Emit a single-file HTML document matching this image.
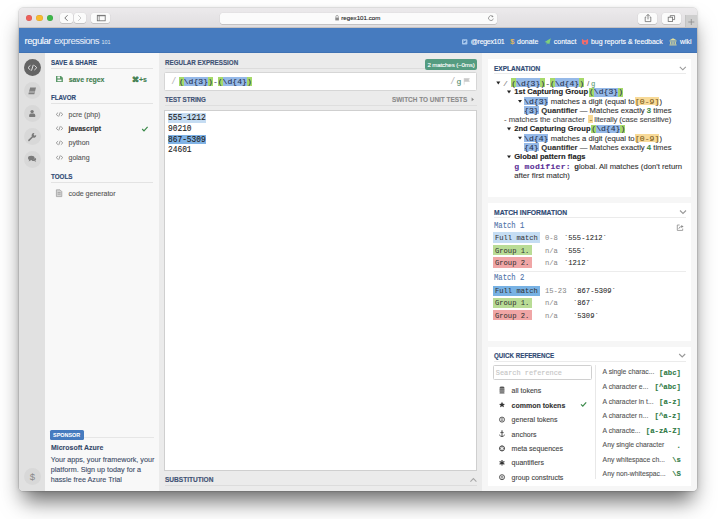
<!DOCTYPE html>
<html><head><meta charset="utf-8">
<style>
*{box-sizing:border-box;margin:0;padding:0}
html,body{width:718px;height:519px;overflow:hidden;background:#fff;position:relative;font-family:"Liberation Sans",sans-serif;}
.a{position:absolute;}
.t{position:absolute;line-height:1;white-space:nowrap;-webkit-text-stroke:0.1px currentColor;}
.t span{white-space:pre}
.m{font-family:"Liberation Mono",monospace;}
</style></head><body>

<div class="a" style="left:19.00px;top:7.80px;width:678.00px;height:483.20px;background:#ebebeb;border-radius:3.8px;box-shadow:0 14px 20px -4px rgba(0,0,0,0.58),0 0 4px rgba(0,0,0,0.12),0 0 0 0.5px rgba(0,0,0,0.14);"></div>
<div class="a" style="left:19.00px;top:7.80px;width:678.00px;height:20.20px;background:linear-gradient(#eceaec,#e0dee0);border-radius:3.8px 3.8px 0 0;border-bottom:1px solid #c6c2c2;"></div>
<div class="a" style="left:25.70px;top:14.7px;width:6.4px;height:6.4px;border-radius:50%;background:#ee5f5a;box-shadow:inset 0 0 0 0.4px rgba(0,0,0,0.12)"></div>
<div class="a" style="left:36.40px;top:14.7px;width:6.4px;height:6.4px;border-radius:50%;background:#f8ba2e;box-shadow:inset 0 0 0 0.4px rgba(0,0,0,0.12)"></div>
<div class="a" style="left:46.80px;top:14.7px;width:6.4px;height:6.4px;border-radius:50%;background:#3db849;box-shadow:inset 0 0 0 0.4px rgba(0,0,0,0.12)"></div>
<div class="a" style="left:60.00px;top:13.00px;width:12.60px;height:10.40px;background:#fbfbfb;background:#fbfbfb;border-radius:2px;box-shadow:0 0.5px 0.6px rgba(0,0,0,0.22),0 0 0 0.3px rgba(0,0,0,0.08);"></div>
<div class="a" style="left:73.60px;top:13.00px;width:12.40px;height:10.40px;background:#fbfbfb;background:#fbfbfb;border-radius:2px;box-shadow:0 0.5px 0.6px rgba(0,0,0,0.22),0 0 0 0.3px rgba(0,0,0,0.08);"></div>
<div class="a" style="left:91.40px;top:13.00px;width:18.60px;height:10.40px;background:#fbfbfb;background:#fbfbfb;border-radius:2px;box-shadow:0 0.5px 0.6px rgba(0,0,0,0.22),0 0 0 0.3px rgba(0,0,0,0.08);"></div>
<div class="a" style="left:219.50px;top:13.00px;width:277.10px;height:10.60px;background:#fcfcfc;background:#fbfbfb;border-radius:2px;box-shadow:0 0.5px 0.6px rgba(0,0,0,0.22),0 0 0 0.3px rgba(0,0,0,0.08);"></div>
<div class="a" style="left:638.20px;top:12.90px;width:18.70px;height:10.70px;background:#fbfbfb;background:#fbfbfb;border-radius:2px;box-shadow:0 0.5px 0.6px rgba(0,0,0,0.22),0 0 0 0.3px rgba(0,0,0,0.08);"></div>
<div class="a" style="left:661.80px;top:12.90px;width:18.80px;height:10.70px;background:#fbfbfb;background:#fbfbfb;border-radius:2px;box-shadow:0 0.5px 0.6px rgba(0,0,0,0.22),0 0 0 0.3px rgba(0,0,0,0.08);"></div>
<div class="a" style="left:685.00px;top:15.20px;width:12.00px;height:11.80px;background:#cfcfcf;border-left:0.5px solid #c4c4c4;"></div>
<svg class="a" style="left:0;top:0" width="718" height="30">
 <path d="M67.6 15.2 L64.8 18 L67.6 20.8" fill="none" stroke="#6a6a6a" stroke-width="0.9"/>
 <path d="M78.2 15.2 L81 18 L78.2 20.8" fill="none" stroke="#c4c4c4" stroke-width="0.9"/>
 <rect x="97.3" y="15.3" width="7.9" height="5.5" fill="none" stroke="#707070" stroke-width="0.8"/>
 <rect x="97.3" y="15.3" width="7.9" height="0.9" fill="#707070"/>
 <line x1="99.2" y1="15.3" x2="99.2" y2="20.8" stroke="#707070" stroke-width="0.7"/>
 <rect x="335.3" y="17.6" width="3.6" height="2.8" fill="#8a8a8a"/>
 <path d="M335.9 17.8 V16.6 a1.2 1.2 0 0 1 2.4 0 V17.8" fill="none" stroke="#8a8a8a" stroke-width="0.7"/>
 <path d="M492.6 16.4 A2.4 2.4 0 1 0 493.3 18.6" fill="none" stroke="#8a8a8a" stroke-width="0.8"/>
 <path d="M491.6 15.3 L493.6 16.3 L492 17.6 Z" fill="#8a8a8a"/>
 <path d="M646.3 17 H645.2 V21.6 H650.8 V17 H649.7" fill="none" stroke="#6e6e6e" stroke-width="0.8"/>
 <path d="M648 19.4 V14.4 M646.4 16 L648 14.4 L649.6 16" fill="none" stroke="#6e6e6e" stroke-width="0.8"/>
 <rect x="668.2" y="17.2" width="4.4" height="4.2" fill="none" stroke="#6e6e6e" stroke-width="0.8"/>
 <path d="M670.2 17.2 V15.6 H674.6 V19.6 H672.6" fill="none" stroke="#6e6e6e" stroke-width="0.8"/>
 <path d="M691.3 19 V25 M688.3 22 H694.3" stroke="#8a8a8a" stroke-width="0.8"/>
</svg>
<div class="t" id="url" style="left:341.20px;top:14.95px;font-size:6.2px;color:#222;font-weight:normal;letter-spacing:0px;">regex101.com</div>
<div class="a" style="left:19.00px;top:28.00px;width:678.00px;height:25.00px;background:#467bbf;border-bottom:0.8px solid #3f72b4;"></div>
<div class="t" id="logo" style="left:24.6px;top:34.5px;font-size:9.6px;color:#fff;line-height:12px;-webkit-text-stroke:0.05px #fff"><span id="lg1" style="letter-spacing:-0.5px;">regular</span><span id="lg2" style="letter-spacing:-0.56px;color:#e8eef8;margin-left:3px;-webkit-text-stroke:0">expressions</span><span id="lg3" style="font-size:5.4px;margin-left:2.6px;letter-spacing:-0.1px;color:#dfe8f4;-webkit-text-stroke:0">101</span></div>
<div class="t" id="l1" style="left:470.80px;top:38.17px;font-size:7px;color:#fff;font-weight:normal;letter-spacing:-0.3px;">@regex101</div>
<div class="t" id="l2" style="left:510.20px;top:37.84px;font-size:7.4px;color:#f2c14a;font-weight:normal;letter-spacing:0px;">$</div>
<div class="t" id="l3" style="left:517.00px;top:38.17px;font-size:7px;color:#fff;font-weight:normal;letter-spacing:0px;">donate</div>
<div class="t" id="l4" style="left:553.80px;top:38.17px;font-size:7px;color:#fff;font-weight:normal;letter-spacing:0px;">contact</div>
<div class="t" id="l5" style="left:590.90px;top:38.17px;font-size:7px;color:#fff;font-weight:normal;letter-spacing:-0.02px;">bug reports &amp; feedback</div>
<div class="t" id="l6" style="left:679.90px;top:38.17px;font-size:7px;color:#fff;font-weight:normal;letter-spacing:0px;">wiki</div>
<svg class="a" style="left:0;top:28px" width="718" height="25">
 <rect x="462" y="11.2" width="5.4" height="5.4" rx="0.8" fill="#a9c9ee"/>
 <path d="M463.2 14.8 q1.6 0.6 2.8 -1.4 l0.4 -0.7 l-0.5 0.1 q-0.6 -0.5 -1.1 0.2 q-1 0 -1.6 -0.7 q-0.2 0.9 0.5 1.3 q-0.5 0.6 -0.5 1.2z" fill="#467bbf"/>
 <path d="M550.8 10.3 L544.7 14.1 L546.9 14.7 L546.2 16.7 L547.9 15.3 L549.3 16.3 Z" fill="#80d07c"/>
 <path d="M581.9 11.2 L582.5 10.9 L583.8 12.2 H586.2 L587.5 10.9 L588.1 11.2 V14.8 Q588.1 16.7 585 16.7 Q581.9 16.7 581.9 14.8 Z" fill="#f26b6b"/>
 <circle cx="585" cy="15.1" r="1" fill="#467bbf"/>
 <path d="M669.5 12.3 L673 10.3 L676.6 12.3 Z" fill="#e4df9a"/>
 <rect x="669.5" y="12.6" width="7.1" height="0.8" fill="#e4df9a"/>
 <rect x="670.2" y="13.6" width="1.2" height="2.8" fill="#e4df9a"/><rect x="672.4" y="13.6" width="1.2" height="2.8" fill="#e4df9a"/><rect x="674.6" y="13.6" width="1.2" height="2.8" fill="#e4df9a"/>
 <rect x="669.5" y="16.5" width="7.1" height="0.9" fill="#e4df9a"/>
</svg>
<div class="a" style="left:19.00px;top:53.00px;width:26.00px;height:438.00px;background:#e1e1e1;border-bottom-left-radius:4.5px;"></div>
<div class="a" style="left:45.00px;top:53.00px;width:114.00px;height:438.00px;background:#f8f8f8;"></div>
<div class="a" style="left:159.00px;top:53.00px;width:322.50px;height:438.00px;background:#ebebeb;"></div>
<div class="a" style="left:481.50px;top:53.00px;width:215.50px;height:438.00px;background:#f6f6f6;border-bottom-right-radius:4.5px;"></div>
<div class="a" style="left:23.80px;top:59.10px;width:17.2px;height:17.2px;border-radius:50%;background:#646464"></div>
<div class="a" style="left:23.80px;top:81.90px;width:17.2px;height:17.2px;border-radius:50%;background:#d8d8d8"></div>
<div class="a" style="left:23.80px;top:104.80px;width:17.2px;height:17.2px;border-radius:50%;background:#d8d8d8"></div>
<div class="a" style="left:23.80px;top:127.70px;width:17.2px;height:17.2px;border-radius:50%;background:#d8d8d8"></div>
<div class="a" style="left:23.80px;top:150.60px;width:17.2px;height:17.2px;border-radius:50%;background:#d8d8d8"></div>
<div class="a" style="left:23.80px;top:467.80px;width:17.2px;height:17.2px;border-radius:50%;background:#d8d8d8"></div>
<svg class="a" style="left:19px;top:53px" width="26" height="438">
 <path d="M11.4 12.4 L9 14.7 L11.4 17 M15.4 12.4 L17.8 14.7 L15.4 17 M14.3 11.8 L12.5 17.6" fill="none" stroke="#ececec" stroke-width="0.9"/>
 <path d="M9.4 41.2 L11.1 34.4 H17 L15.3 41.2 Z" fill="#7e7e7e"/>
 <path d="M9.8 39.6 H15.6 M10.1 38.4 H15.9" stroke="#dedede" stroke-width="0.45"/>
 <circle cx="13.1" cy="58.6" r="1.7" fill="#7a7a7a"/>
 <path d="M10.2 64.1 V62.2 Q10.2 60.6 11.8 60.6 H14.6 Q16.2 60.6 16.2 62.2 V64.1 Z" fill="#7a7a7a"/>
 <path d="M9.9 87.4 L14.3 83" stroke="#7a7a7a" stroke-width="1.5" stroke-linecap="round"/>
 <path d="M13.3 84.1 A2.3 2.3 0 0 1 15.4 80.2 L14.6 81.8 L15.5 82.8 L17.2 82.1 A2.3 2.3 0 0 1 13.3 84.1 Z" fill="#7a7a7a"/>
 <ellipse cx="12.3" cy="104.9" rx="3.3" ry="2.2" fill="#7a7a7a"/>
 <path d="M10.4 106.4 L9.6 108.4 L12.4 106.9 Z" fill="#7a7a7a"/>
 <path d="M14.6 107.9 Q17.2 107.9 17.2 106.3 Q17.2 105.2 16 104.7 Q15.6 106.9 12.4 107.4 Q13.2 107.9 14.6 107.9 Z M16.2 107.6 L17.4 109 L15.2 108" fill="#7a7a7a"/>
 <text x="13.4" y="426.6" font-size="9.5" fill="#8a8a8a" text-anchor="middle" font-family="Liberation Sans">$</text>
</svg>
<div class="t" id="h1" style="left:50.85px;top:58.91px;font-size:7.2px;color:#2f4a74;font-weight:bold;letter-spacing:0px;transform:scaleX(0.8592);transform-origin:0 0;-webkit-text-stroke:0.15px #2f4a74;">SAVE &amp; SHARE</div>
<div class="a" style="left:50.85px;top:68.00px;width:102.15px;height:0.70px;background:#e3e3e3;"></div>
<div class="t" id="s1" style="left:68.70px;top:75.77px;font-size:7px;color:#3f7d4f;font-weight:bold;letter-spacing:-0.05px;">save regex</div>
<div class="t" id="s2" style="left:132.20px;top:75.77px;font-size:7px;color:#3f7d4f;font-weight:bold;letter-spacing:-0.2px;">&#8984;+s</div>
<svg class="a" style="left:0;top:0" width="160" height="200">
 <path d="M56 75.9 H61 L62.9 77.8 V82 H56 Z" fill="#5a9868"/>
 <rect x="57.4" y="76.5" width="2.6" height="1.9" fill="#f7f7f7"/>
 <rect x="57.4" y="79.6" width="4.1" height="1.6" fill="#f7f7f7"/>
</svg>
<div class="t" id="h2" style="left:50.85px;top:94.01px;font-size:7.2px;color:#2f4a74;font-weight:bold;letter-spacing:0px;transform:scaleX(0.8619);transform-origin:0 0;-webkit-text-stroke:0.15px #2f4a74;">FLAVOR</div>
<div class="a" style="left:50.85px;top:102.80px;width:102.15px;height:0.70px;background:#e3e3e3;"></div>
<div class="t" style="left:68.50px;top:110.87px;font-size:7px;color:#555;font-weight:normal;letter-spacing:0px;">pcre (php)</div>
<svg class="a" style="left:0;top:0" width="160" height="200"><path d="M58.1 112.60 L56.2 114.40 L58.1 116.20 M60.9 112.60 L62.8 114.40 L60.9 116.20 M60.3 112.20 L58.7 116.60" fill="none" stroke="#8c8c8c" stroke-width="0.85"/></svg>
<div class="t" style="left:68.50px;top:124.77px;font-size:7px;color:#333;font-weight:bold;letter-spacing:0px;">javascript</div>
<svg class="a" style="left:0;top:0" width="160" height="200"><path d="M58.1 126.50 L56.2 128.30 L58.1 130.10 M60.9 126.50 L62.8 128.30 L60.9 130.10 M60.3 126.10 L58.7 130.50" fill="none" stroke="#8c8c8c" stroke-width="0.85"/></svg>
<div class="t" style="left:68.50px;top:139.37px;font-size:7px;color:#555;font-weight:normal;letter-spacing:0px;">python</div>
<svg class="a" style="left:0;top:0" width="160" height="200"><path d="M58.1 141.10 L56.2 142.90 L58.1 144.70 M60.9 141.10 L62.8 142.90 L60.9 144.70 M60.3 140.70 L58.7 145.10" fill="none" stroke="#8c8c8c" stroke-width="0.85"/></svg>
<div class="t" style="left:68.50px;top:154.07px;font-size:7px;color:#555;font-weight:normal;letter-spacing:0px;">golang</div>
<svg class="a" style="left:0;top:0" width="160" height="200"><path d="M58.1 155.80 L56.2 157.60 L58.1 159.40 M60.9 155.80 L62.8 157.60 L60.9 159.40 M60.3 155.40 L58.7 159.80" fill="none" stroke="#8c8c8c" stroke-width="0.85"/></svg>
<svg class="a" style="left:0;top:0" width="160" height="200">
 <path d="M142.2 129 L144 130.8 L147.6 126.8" fill="none" stroke="#3b8a4a" stroke-width="1.2"/>
 <path d="M56.4 189.8 H60 L61.8 191.6 V196.6 H56.4 Z" fill="#d4d4d4" stroke="#999" stroke-width="0.7"/>
 <path d="M57.6 192.6 H60.6 M57.6 194.2 H60.6" stroke="#8a8a8a" stroke-width="0.6"/>
</svg>
<div class="t" id="h3" style="left:50.60px;top:172.97px;font-size:7.0px;color:#2f4a74;font-weight:bold;letter-spacing:0px;transform:scaleX(0.8964);transform-origin:0 0;-webkit-text-stroke:0.15px #2f4a74;">TOOLS</div>
<div class="a" style="left:50.85px;top:181.70px;width:102.15px;height:0.70px;background:#e3e3e3;"></div>
<div class="t" style="left:68.50px;top:189.67px;font-size:7px;color:#555;font-weight:normal;letter-spacing:0px;">code generator</div>
<div class="a" style="left:50.30px;top:430.00px;width:33.50px;height:9.80px;background:#467bbf;border-radius:1.5px;"></div>
<div class="t" id="sp" style="left:53.40px;top:432.69px;font-size:5.8px;color:#fff;font-weight:bold;letter-spacing:0px;transform:scaleX(0.9377);transform-origin:0 0;-webkit-text-stroke:0.05px #fff;">SPONSOR</div>
<div class="a" style="left:83.80px;top:436.80px;width:69.90px;height:0.60px;background:#e6e6e6;"></div>
<div class="t" id="az" style="left:50.75px;top:444.31px;font-size:7.2px;color:#34496a;font-weight:bold;letter-spacing:0px;transform:scaleX(0.9688);transform-origin:0 0;-webkit-text-stroke:0.1px #34496a;">Microsoft Azure</div>
<div class="t" id="spt462" style="left:50.75px;top:456.11px;font-size:7.2px;color:#3a4a66;font-weight:normal;letter-spacing:0px;">Your apps, your framework, your</div>
<div class="t" id="spt472" style="left:50.75px;top:465.91px;font-size:7.2px;color:#3a4a66;font-weight:normal;letter-spacing:0px;">platform. Sign up today for a</div>
<div class="t" id="spt481" style="left:50.75px;top:475.71px;font-size:7.2px;color:#3a4a66;font-weight:normal;letter-spacing:0px;">hassle free Azure Trial</div>
<div class="t" id="m1" style="left:164.80px;top:58.87px;font-size:7.0px;color:#3f5275;font-weight:bold;letter-spacing:0px;transform:scaleX(0.8919);transform-origin:0 0;-webkit-text-stroke:0.15px #3f5275;">REGULAR EXPRESSION</div>
<div class="a" style="left:164.80px;top:67.90px;width:260.10px;height:0.60px;background:#dcdcdc;"></div>
<div class="a" style="left:424.90px;top:59.10px;width:51.90px;height:10.80px;background:#559c81;border-radius:2px;"></div>
<div class="t" id="badge" style="left:427.40px;top:61.65px;font-size:6.2px;color:#fff;font-weight:normal;letter-spacing:-0.15px;">2 matches (~0ms)</div>
<div class="a" style="left:164.20px;top:72.20px;width:312.60px;height:18.80px;background:#fff;border:0.6px solid #d6d6d6;border-radius:1.5px;"></div>
<div class="t" style="left:171.20px;top:78.16px;font-size:8.4px;color:#b0b0b0;font-weight:normal;letter-spacing:0px;font-family:'Liberation Mono',monospace;-webkit-text-stroke:0;">/</div>
<div class="a" style="left:178.90px;top:76.90px;width:4.86px;height:8.90px;background:#a6d96a;"></div>
<div class="a" style="left:183.76px;top:76.90px;width:24.30px;height:8.90px;background:#95b9e8;"></div>
<div class="a" style="left:208.06px;top:76.90px;width:4.86px;height:8.90px;background:#a6d96a;"></div>
<div class="a" style="left:217.78px;top:76.90px;width:4.86px;height:8.90px;background:#a6d96a;"></div>
<div class="a" style="left:222.64px;top:76.90px;width:24.30px;height:8.90px;background:#95b9e8;"></div>
<div class="a" style="left:246.94px;top:76.90px;width:4.86px;height:8.90px;background:#a6d96a;"></div>
<div class="t" id="rx" style="left:178.90px;top:77.59px;font-size:8.1px;color:#2a3550;font-weight:normal;letter-spacing:0px;font-family:'Liberation Mono',monospace;">(\d{3})-(\d{4})</div>
<div class="t" style="left:450.20px;top:78.16px;font-size:8.4px;color:#b0b0b0;font-weight:normal;letter-spacing:0px;font-family:'Liberation Mono',monospace;-webkit-text-stroke:0;">/</div>
<div class="t" style="left:456.40px;top:78.19px;font-size:8.1px;color:#4f8a6a;font-weight:normal;letter-spacing:0px;font-family:'Liberation Mono',monospace;">g</div>
<svg class="a" style="left:0;top:0" width="480" height="100">
 <path d="M464.2 78.2 V84.6 M464.2 78.6 H469.4 L468.5 80 L469.4 81.4 H464.2" fill="#c8c8c8" stroke="#c8c8c8" stroke-width="0.6"/>
</svg>
<div class="t" id="m2" style="left:164.80px;top:95.77px;font-size:7.0px;color:#3f5275;font-weight:bold;letter-spacing:0px;transform:scaleX(0.8837);transform-origin:0 0;-webkit-text-stroke:0.15px #3f5275;">TEST STRING</div>
<div class="t" id="sw" style="left:392.00px;top:95.77px;font-size:7.0px;color:#8a8a8a;font-weight:bold;letter-spacing:0px;transform:scaleX(0.9191);transform-origin:0 0;-webkit-text-stroke:0.1px #8a8a8a;">SWITCH TO UNIT TESTS</div>
<svg class="a" style="left:0;top:0" width="480" height="110"><path d="M471.6 97.6 L474 99.4 L471.6 101.2 Z" fill="#8a8a8a"/></svg>
<div class="a" style="left:164.80px;top:105.40px;width:312.00px;height:0.60px;background:#dedede;"></div>
<div class="a" style="left:164.20px;top:109.60px;width:312.60px;height:361.20px;background:#fff;border:0.6px solid #cfcfcf;"></div>
<div class="a" style="left:167.50px;top:113.00px;width:38.50px;height:9.60px;background:#c5dcf2;"></div>
<div class="a" style="left:167.50px;top:135.10px;width:38.50px;height:9.10px;background:#80b3e5;"></div>
<div class="t" id="ts0" style="left:167.90px;top:113.91px;font-size:8.6px;color:#222;font-weight:normal;letter-spacing:0px;font-family:'Liberation Mono',monospace;transform:scaleX(0.915);transform-origin:0 0;-webkit-text-stroke:0.12px #222;">555-1212</div>
<div class="t" id="ts1" style="left:167.90px;top:124.74px;font-size:8.6px;color:#222;font-weight:normal;letter-spacing:0px;font-family:'Liberation Mono',monospace;transform:scaleX(0.915);transform-origin:0 0;-webkit-text-stroke:0.12px #222;">90210</div>
<div class="t" id="ts2" style="left:167.90px;top:135.57px;font-size:8.6px;color:#222;font-weight:normal;letter-spacing:0px;font-family:'Liberation Mono',monospace;transform:scaleX(0.915);transform-origin:0 0;-webkit-text-stroke:0.12px #222;">867-5309</div>
<div class="t" id="ts3" style="left:167.90px;top:146.40px;font-size:8.6px;color:#222;font-weight:normal;letter-spacing:0px;font-family:'Liberation Mono',monospace;transform:scaleX(0.915);transform-origin:0 0;-webkit-text-stroke:0.12px #222;">24601</div>
<div class="t" id="m3" style="left:164.80px;top:475.77px;font-size:7.0px;color:#3f5275;font-weight:bold;letter-spacing:0px;transform:scaleX(0.9358);transform-origin:0 0;-webkit-text-stroke:0.15px #3f5275;">SUBSTITUTION</div>
<div class="a" style="left:164.80px;top:485.20px;width:312.00px;height:0.60px;background:#dcdcdc;"></div>
<svg class="a" style="left:0;top:0" width="480" height="491"><path d="M470.4 481.6 L473.4 478.6 L476.4 481.6" fill="none" stroke="#a8a8a8" stroke-width="1.1"/></svg>
<div class="a" style="left:487.70px;top:59.00px;width:203.50px;height:137.60px;background:#fff;"></div>
<div class="a" style="left:487.70px;top:203.00px;width:203.50px;height:138.00px;background:#fff;"></div>
<div class="a" style="left:487.70px;top:346.50px;width:203.50px;height:139.20px;background:#fff;"></div>
<div class="t" id="e0" style="left:493.80px;top:64.67px;font-size:7.0px;color:#2f4a74;font-weight:bold;letter-spacing:0px;transform:scaleX(0.9325);transform-origin:0 0;-webkit-text-stroke:0.15px #2f4a74;">EXPLANATION</div>
<svg class="a" style="left:0;top:0" width="718" height="519"><path d="M679.8 66.8 L682.8 69.8 L685.8 66.8" fill="none" stroke="#999" stroke-width="1.1"/></svg>
<div class="a" style="left:493.90px;top:73.00px;width:192.10px;height:0.60px;background:#ebebeb;"></div>
<svg class="a" style="left:0;top:0" width="718" height="519"><path d="M496.3 81.6 L500.3 81.6 L498.3 84.4 Z" fill="#222"/></svg>
<div class="t" style="left:503.00px;top:79.79px;font-size:8.1px;color:#888;font-weight:normal;letter-spacing:0px;font-family:'Liberation Mono',monospace;">/</div>
<div class="a" style="left:511.20px;top:77.80px;width:4.86px;height:9.20px;background:#a6d96a;"></div>
<div class="a" style="left:516.06px;top:77.80px;width:24.30px;height:9.20px;background:#95b9e8;"></div>
<div class="a" style="left:540.36px;top:77.80px;width:4.86px;height:9.20px;background:#a6d96a;"></div>
<div class="a" style="left:550.08px;top:77.80px;width:4.86px;height:9.20px;background:#a6d96a;"></div>
<div class="a" style="left:554.94px;top:77.80px;width:24.30px;height:9.20px;background:#95b9e8;"></div>
<div class="a" style="left:579.24px;top:77.80px;width:4.86px;height:9.20px;background:#a6d96a;"></div>
<div class="t" id="e1" style="left:511.20px;top:79.79px;font-size:8.1px;color:#2a3550;font-weight:normal;letter-spacing:0px;font-family:'Liberation Mono',monospace;">(\d{3})-(\d{4})</div>
<div class="t" id="e1b" style="left:587.30px;top:80.07px;font-size:7px;color:#666;font-weight:normal;letter-spacing:0px;">/ <span style="color:#5a9a70">g</span></div>
<svg class="a" style="left:0;top:0" width="718" height="519"><path d="M507.0 90.6 L511.0 90.6 L509.0 93.4 Z" fill="#222"/></svg>
<div class="t" id="cg1" style="left:514.20px;top:88.37px;font-size:7.6px;color:#222;font-weight:bold;letter-spacing:0px;">1st Capturing Group</div>
<div class="a" style="left:589.00px;top:87.80px;width:4.86px;height:8.80px;background:#a6d96a;"></div>
<div class="a" style="left:593.86px;top:87.80px;width:24.30px;height:8.80px;background:#95b9e8;"></div>
<div class="a" style="left:618.16px;top:87.80px;width:4.86px;height:8.80px;background:#a6d96a;"></div>
<div class="t" style="left:589.00px;top:88.39px;font-size:8.1px;color:#2a3550;font-weight:normal;letter-spacing:0px;font-family:'Liberation Mono',monospace;">(\d{3})</div>
<svg class="a" style="left:0;top:0" width="718" height="519"><path d="M518.0 99.89999999999999 L522.0 99.89999999999999 L520.0 102.7 Z" fill="#222"/></svg>
<div class="a" style="left:524.10px;top:96.60px;width:24.30px;height:8.80px;background:#95b9e8;"></div>
<div class="t" style="left:524.10px;top:97.89px;font-size:8.1px;color:#2a3550;font-weight:normal;letter-spacing:0px;font-family:'Liberation Mono',monospace;">\d{3}</div>
<div class="t" id="md1" style="left:550.80px;top:97.78px;font-size:7.7px;color:#333;font-weight:normal;letter-spacing:0px;">matches a digit (equal to</div>
<div class="a" style="left:634.70px;top:96.80px;width:24.60px;height:8.60px;background:#f8da98;"></div>
<div class="t" style="left:635.00px;top:97.89px;font-size:8.1px;color:#7a5a20;font-weight:normal;letter-spacing:0px;font-family:'Liberation Mono',monospace;">[0-9]</div>
<div class="t" style="left:659.40px;top:97.78px;font-size:7.7px;color:#333;font-weight:normal;letter-spacing:0px;">)</div>
<div class="a" style="left:524.10px;top:105.80px;width:14.70px;height:8.30px;background:#95b9e8;"></div>
<div class="t" style="left:524.10px;top:106.69px;font-size:8.1px;color:#2a3550;font-weight:normal;letter-spacing:0px;font-family:'Liberation Mono',monospace;">{3}</div>
<div class="t" id="q1" style="left:541.30px;top:106.68px;font-size:7.7px;color:#333;font-weight:normal;letter-spacing:0px;"><b>Quantifier</b> &#8212; Matches exactly <b style="color:#3b8a4a">3</b> times</div>
<div class="t" id="l5a" style="left:504.00px;top:115.98px;font-size:7.7px;color:#4a4a4a;font-weight:normal;letter-spacing:0px;">- matches the character</div>
<div class="a" style="left:588.10px;top:114.60px;width:5.00px;height:8.80px;background:#f8da98;"></div>
<div class="t" style="left:588.60px;top:115.79px;font-size:8.1px;color:#7a5a20;font-weight:normal;letter-spacing:0px;font-family:'Liberation Mono',monospace;">-</div>
<div class="t" id="l5b" style="left:594.30px;top:115.98px;font-size:7.7px;color:#4a4a4a;font-weight:normal;letter-spacing:-0.1px;">literally (case sensitive)</div>
<svg class="a" style="left:0;top:0" width="718" height="519"><path d="M507.0 127.6 L511.0 127.6 L509.0 130.4 Z" fill="#222"/></svg>
<div class="t" id="cg2" style="left:514.20px;top:125.37px;font-size:7.6px;color:#222;font-weight:bold;letter-spacing:0px;">2nd Capturing Group</div>
<div class="a" style="left:591.30px;top:124.60px;width:4.86px;height:8.80px;background:#a6d96a;"></div>
<div class="a" style="left:596.16px;top:124.60px;width:24.30px;height:8.80px;background:#95b9e8;"></div>
<div class="a" style="left:620.46px;top:124.60px;width:4.86px;height:8.80px;background:#a6d96a;"></div>
<div class="t" style="left:591.30px;top:125.19px;font-size:8.1px;color:#2a3550;font-weight:normal;letter-spacing:0px;font-family:'Liberation Mono',monospace;">(\d{4})</div>
<svg class="a" style="left:0;top:0" width="718" height="519"><path d="M518.0 136.79999999999998 L522.0 136.79999999999998 L520.0 139.6 Z" fill="#222"/></svg>
<div class="a" style="left:524.10px;top:133.60px;width:24.30px;height:8.80px;background:#95b9e8;"></div>
<div class="t" style="left:524.10px;top:134.79px;font-size:8.1px;color:#2a3550;font-weight:normal;letter-spacing:0px;font-family:'Liberation Mono',monospace;">\d{4}</div>
<div class="t" style="left:550.80px;top:134.68px;font-size:7.7px;color:#333;font-weight:normal;letter-spacing:0px;">matches a digit (equal to</div>
<div class="a" style="left:634.70px;top:133.80px;width:24.60px;height:8.60px;background:#f8da98;"></div>
<div class="t" style="left:635.00px;top:134.79px;font-size:8.1px;color:#7a5a20;font-weight:normal;letter-spacing:0px;font-family:'Liberation Mono',monospace;">[0-9]</div>
<div class="t" style="left:659.40px;top:134.68px;font-size:7.7px;color:#333;font-weight:normal;letter-spacing:0px;">)</div>
<div class="a" style="left:524.10px;top:142.80px;width:14.70px;height:8.30px;background:#95b9e8;"></div>
<div class="t" style="left:524.10px;top:143.69px;font-size:8.1px;color:#2a3550;font-weight:normal;letter-spacing:0px;font-family:'Liberation Mono',monospace;">{4}</div>
<div class="t" id="q2" style="left:541.30px;top:143.58px;font-size:7.7px;color:#333;font-weight:normal;letter-spacing:0px;"><b>Quantifier</b> &#8212; Matches exactly <b style="color:#3b8a4a">4</b> times</div>
<svg class="a" style="left:0;top:0" width="718" height="519"><path d="M507.0 155.4 L511.0 155.4 L509.0 158.20000000000002 Z" fill="#222"/></svg>
<div class="t" id="gp" style="left:514.20px;top:153.17px;font-size:7.6px;color:#222;font-weight:bold;letter-spacing:0px;">Global pattern flags</div>
<div class="t" id="gm" style="left:514.30px;top:162.99px;font-size:8.1px;color:#5a2f96;font-weight:bold;letter-spacing:0.3px;font-family:'Liberation Mono',monospace;">g modifier:</div>
<div class="t" id="gl" style="left:574.20px;top:162.78px;font-size:7.7px;color:#333;font-weight:normal;letter-spacing:0px;"><b>g</b>lobal. All matches (don't return</div>
<div class="t" id="af" style="left:514.30px;top:172.08px;font-size:7.7px;color:#333;font-weight:normal;letter-spacing:0px;">after first match)</div>
<div class="t" id="mi" style="left:494.00px;top:208.77px;font-size:7.0px;color:#2f4a74;font-weight:bold;letter-spacing:0px;transform:scaleX(0.9687);transform-origin:0 0;-webkit-text-stroke:0.15px #2f4a74;">MATCH INFORMATION</div>
<svg class="a" style="left:0;top:0" width="718" height="519"><path d="M680.0 210.5 L683.0 213.5 L686.0 210.5" fill="none" stroke="#999" stroke-width="1.1"/></svg>
<div class="a" style="left:493.70px;top:216.90px;width:192.30px;height:0.60px;background:#ebebeb;"></div>
<div class="t" id="mt1" style="left:493.70px;top:221.71px;font-size:8.2px;color:#4d72a8;font-weight:normal;letter-spacing:0px;font-family:'Liberation Mono',monospace;transform:scaleX(0.88);transform-origin:0 0;">Match 1</div>
<svg class="a" style="left:0;top:0" width="718" height="519"><path d="M679.6 225 H677.3 V230.4 H682.7 V228.6 M678.7 228.8 Q679.2 226.5 682 226.5" fill="none" stroke="#8a8a8a" stroke-width="0.8"/><path d="M681.3 225 L683.6 226.5 L681.3 228 Z" fill="#8a8a8a"/></svg>
<div class="a" style="left:493.10px;top:232.30px;width:46.70px;height:10.50px;background:#c5ddf3;"></div>
<div class="t" style="left:495.20px;top:233.84px;font-size:7.9px;color:#333;font-weight:normal;letter-spacing:0px;font-family:'Liberation Mono',monospace;transform:scaleX(0.905);transform-origin:0 0;-webkit-text-stroke:0.04px currentColor;">Full match</div>
<div class="t" style="left:545.00px;top:233.84px;font-size:7.9px;color:#8a8a8a;font-weight:normal;letter-spacing:0px;font-family:'Liberation Mono',monospace;transform:scaleX(0.905);transform-origin:0 0;-webkit-text-stroke:0.04px currentColor;">0-8</div>
<div class="t" style="left:563.80px;top:233.84px;font-size:7.9px;color:#222;font-weight:normal;letter-spacing:0px;font-family:'Liberation Mono',monospace;transform:scaleX(0.905);transform-origin:0 0;-webkit-text-stroke:0.04px currentColor;">`555-1212`</div>
<div class="a" style="left:493.10px;top:244.90px;width:38.50px;height:10.60px;background:#b9dc96;"></div>
<div class="t" style="left:495.20px;top:246.54px;font-size:7.9px;color:#333;font-weight:normal;letter-spacing:0px;font-family:'Liberation Mono',monospace;transform:scaleX(0.905);transform-origin:0 0;-webkit-text-stroke:0.04px currentColor;">Group 1.</div>
<div class="t" style="left:545.00px;top:246.54px;font-size:7.9px;color:#8a8a8a;font-weight:normal;letter-spacing:0px;font-family:'Liberation Mono',monospace;transform:scaleX(0.905);transform-origin:0 0;-webkit-text-stroke:0.04px currentColor;">n/a</div>
<div class="t" style="left:563.80px;top:246.54px;font-size:7.9px;color:#222;font-weight:normal;letter-spacing:0px;font-family:'Liberation Mono',monospace;transform:scaleX(0.905);transform-origin:0 0;-webkit-text-stroke:0.04px currentColor;">`555`</div>
<div class="a" style="left:493.10px;top:257.10px;width:38.50px;height:10.70px;background:#f0a6a6;"></div>
<div class="t" style="left:495.20px;top:258.84px;font-size:7.9px;color:#333;font-weight:normal;letter-spacing:0px;font-family:'Liberation Mono',monospace;transform:scaleX(0.905);transform-origin:0 0;-webkit-text-stroke:0.04px currentColor;">Group 2.</div>
<div class="t" style="left:545.00px;top:258.84px;font-size:7.9px;color:#8a8a8a;font-weight:normal;letter-spacing:0px;font-family:'Liberation Mono',monospace;transform:scaleX(0.905);transform-origin:0 0;-webkit-text-stroke:0.04px currentColor;">n/a</div>
<div class="t" style="left:563.80px;top:258.84px;font-size:7.9px;color:#222;font-weight:normal;letter-spacing:0px;font-family:'Liberation Mono',monospace;transform:scaleX(0.905);transform-origin:0 0;-webkit-text-stroke:0.04px currentColor;">`1212`</div>
<div class="a" style="left:493.70px;top:271.30px;width:192.30px;height:0.60px;background:#ececec;"></div>
<div class="t" id="mt2" style="left:493.70px;top:274.31px;font-size:8.2px;color:#4d72a8;font-weight:normal;letter-spacing:0px;font-family:'Liberation Mono',monospace;transform:scaleX(0.88);transform-origin:0 0;">Match 2</div>
<div class="a" style="left:493.10px;top:285.90px;width:46.70px;height:10.00px;background:#78b2e4;"></div>
<div class="t" style="left:495.20px;top:286.94px;font-size:7.9px;color:#333;font-weight:normal;letter-spacing:0px;font-family:'Liberation Mono',monospace;transform:scaleX(0.905);transform-origin:0 0;-webkit-text-stroke:0.04px currentColor;">Full match</div>
<div class="t" style="left:545.00px;top:286.94px;font-size:7.9px;color:#8a8a8a;font-weight:normal;letter-spacing:0px;font-family:'Liberation Mono',monospace;transform:scaleX(0.905);transform-origin:0 0;-webkit-text-stroke:0.04px currentColor;">15-23</div>
<div class="t" style="left:572.50px;top:286.94px;font-size:7.9px;color:#222;font-weight:normal;letter-spacing:0px;font-family:'Liberation Mono',monospace;transform:scaleX(0.905);transform-origin:0 0;-webkit-text-stroke:0.04px currentColor;">`867-5309`</div>
<div class="a" style="left:493.10px;top:298.20px;width:38.50px;height:10.00px;background:#b9dc96;"></div>
<div class="t" style="left:495.20px;top:299.24px;font-size:7.9px;color:#333;font-weight:normal;letter-spacing:0px;font-family:'Liberation Mono',monospace;transform:scaleX(0.905);transform-origin:0 0;-webkit-text-stroke:0.04px currentColor;">Group 1.</div>
<div class="t" style="left:545.00px;top:299.24px;font-size:7.9px;color:#8a8a8a;font-weight:normal;letter-spacing:0px;font-family:'Liberation Mono',monospace;transform:scaleX(0.905);transform-origin:0 0;-webkit-text-stroke:0.04px currentColor;">n/a</div>
<div class="t" style="left:572.50px;top:299.24px;font-size:7.9px;color:#222;font-weight:normal;letter-spacing:0px;font-family:'Liberation Mono',monospace;transform:scaleX(0.905);transform-origin:0 0;-webkit-text-stroke:0.04px currentColor;">`867`</div>
<div class="a" style="left:493.10px;top:310.40px;width:38.50px;height:10.10px;background:#f0a6a6;"></div>
<div class="t" style="left:495.20px;top:311.54px;font-size:7.9px;color:#333;font-weight:normal;letter-spacing:0px;font-family:'Liberation Mono',monospace;transform:scaleX(0.905);transform-origin:0 0;-webkit-text-stroke:0.04px currentColor;">Group 2.</div>
<div class="t" style="left:545.00px;top:311.54px;font-size:7.9px;color:#8a8a8a;font-weight:normal;letter-spacing:0px;font-family:'Liberation Mono',monospace;transform:scaleX(0.905);transform-origin:0 0;-webkit-text-stroke:0.04px currentColor;">n/a</div>
<div class="t" style="left:572.50px;top:311.54px;font-size:7.9px;color:#222;font-weight:normal;letter-spacing:0px;font-family:'Liberation Mono',monospace;transform:scaleX(0.905);transform-origin:0 0;-webkit-text-stroke:0.04px currentColor;">`5309`</div>
<div class="t" id="qr" style="left:493.60px;top:352.07px;font-size:7.0px;color:#2f4a74;font-weight:bold;letter-spacing:0px;transform:scaleX(0.8881);transform-origin:0 0;-webkit-text-stroke:0.15px #2f4a74;">QUICK REFERENCE</div>
<svg class="a" style="left:0;top:0" width="718" height="519"><path d="M679.2 354.0 L682.2 357.0 L685.2 354.0" fill="none" stroke="#999" stroke-width="1.1"/></svg>
<div class="a" style="left:493.80px;top:361.10px;width:192.20px;height:0.60px;background:#ebebeb;"></div>
<div class="a" style="left:493.20px;top:365.40px;width:98.60px;height:14.40px;background:#fff;border:0.7px solid #d0d0d0;border-radius:1.5px;"></div>
<div class="t" id="sr" style="left:495.80px;top:369.91px;font-size:6.9px;color:#c4c4c4;font-weight:normal;letter-spacing:0px;font-family:'Liberation Mono',monospace;">Search reference</div>
<div class="a" style="left:594.60px;top:365.00px;width:0.60px;height:114.40px;background:#e8e8e8;"></div>
<div class="t" id="qiall" style="left:511.60px;top:386.97px;font-size:7.0px;color:#444;font-weight:normal;letter-spacing:0px;">all tokens</div>
<div class="t" id="qicommon" style="left:511.60px;top:401.57px;font-size:7.0px;color:#333;font-weight:bold;letter-spacing:0px;">common tokens</div>
<div class="t" id="qigeneral" style="left:511.60px;top:416.27px;font-size:7.0px;color:#444;font-weight:normal;letter-spacing:0px;">general tokens</div>
<div class="t" id="qianchors" style="left:511.60px;top:430.67px;font-size:7.0px;color:#444;font-weight:normal;letter-spacing:0px;">anchors</div>
<div class="t" id="qimeta" style="left:511.60px;top:445.07px;font-size:7.0px;color:#444;font-weight:normal;letter-spacing:0px;">meta sequences</div>
<div class="t" id="qiquantifiers" style="left:511.60px;top:459.47px;font-size:7.0px;color:#444;font-weight:normal;letter-spacing:0px;">quantifiers</div>
<div class="t" id="qigroup" style="left:511.60px;top:473.97px;font-size:7.0px;color:#444;font-weight:normal;letter-spacing:0px;">group constructs</div>
<svg class="a" style="left:0;top:0" width="718" height="519">
 <ellipse cx="502" cy="387.4" rx="2.5" ry="0.9" fill="#555"/><rect x="499.5" y="388.4" width="5" height="1.4" fill="#555"/><rect x="499.5" y="390.3" width="5" height="1.4" fill="#555"/><rect x="499.5" y="392.2" width="5" height="1.3" rx="0.6" fill="#555"/>
 <path d="M502 401.8 L502.9 403.8 L505 403.9 L503.4 405.2 L504 407.3 L502 406.2 L500 407.3 L500.6 405.2 L499 403.9 L501.1 403.8 Z" fill="#333"/>
 <circle cx="502" cy="419.6" r="2.5" fill="none" stroke="#444" stroke-width="0.9"/><ellipse cx="502" cy="419.6" rx="0.8" ry="1.2" fill="none" stroke="#444" stroke-width="0.6"/>
 <path d="M502 431.4 V437 M500.4 432.6 H503.6 M499.2 434.8 Q502 438.2 504.8 434.8" fill="none" stroke="#444" stroke-width="0.9"/><circle cx="502" cy="431" r="0.7" fill="#444"/>
 <circle cx="502" cy="448.4" r="2.5" fill="none" stroke="#444" stroke-width="1"/><path d="M502 445.6 V451.2 M499.2 448.4 H504.8" stroke="#444" stroke-width="0.7"/><circle cx="502" cy="448.4" r="1" fill="#fff"/>
 <path d="M502 460 V465.6 M499.6 461.4 L504.4 464.2 M499.6 464.2 L504.4 461.4" stroke="#333" stroke-width="1.1"/>
 <circle cx="502" cy="477.2" r="2.5" fill="none" stroke="#444" stroke-width="0.9"/><ellipse cx="502" cy="477.2" rx="0.8" ry="1.2" fill="none" stroke="#444" stroke-width="0.6"/>
 <path d="M581 404.4 L582.8 406.2 L586.2 402.4" fill="none" stroke="#3b8a4a" stroke-width="1.2"/>
</svg>
<div class="t" id="rf372" style="left:602.60px;top:369.44px;font-size:6.8px;color:#555;font-weight:normal;letter-spacing:0px;">A single charac...</div>
<div class="t" style="left:659.00px;top:369.60px;font-size:7.3px;color:#2f7a45;font-weight:bold;letter-spacing:0px;font-family:'Liberation Mono',monospace;">[abc]</div>
<div class="t" id="rf386" style="left:602.60px;top:384.14px;font-size:6.8px;color:#555;font-weight:normal;letter-spacing:0px;">A character e...</div>
<div class="t" style="left:654.62px;top:384.30px;font-size:7.3px;color:#2f7a45;font-weight:bold;letter-spacing:0px;font-family:'Liberation Mono',monospace;">[^abc]</div>
<div class="t" id="rf401" style="left:602.60px;top:398.54px;font-size:6.8px;color:#555;font-weight:normal;letter-spacing:0px;">A character in t...</div>
<div class="t" style="left:659.00px;top:398.70px;font-size:7.3px;color:#2f7a45;font-weight:bold;letter-spacing:0px;font-family:'Liberation Mono',monospace;">[a-z]</div>
<div class="t" id="rf416" style="left:602.60px;top:413.24px;font-size:6.8px;color:#555;font-weight:normal;letter-spacing:0px;">A character n...</div>
<div class="t" style="left:654.62px;top:413.40px;font-size:7.3px;color:#2f7a45;font-weight:bold;letter-spacing:0px;font-family:'Liberation Mono',monospace;">[^a-z]</div>
<div class="t" id="rf430" style="left:602.60px;top:427.64px;font-size:6.8px;color:#555;font-weight:normal;letter-spacing:0px;">A characte...</div>
<div class="t" style="left:645.86px;top:427.80px;font-size:7.3px;color:#2f7a45;font-weight:bold;letter-spacing:0px;font-family:'Liberation Mono',monospace;">[a-zA-Z]</div>
<div class="t" id="rf445" style="left:602.60px;top:442.34px;font-size:6.8px;color:#555;font-weight:normal;letter-spacing:0px;">Any single character</div>
<div class="t" style="left:676.52px;top:442.50px;font-size:7.3px;color:#2f7a45;font-weight:bold;letter-spacing:0px;font-family:'Liberation Mono',monospace;">.</div>
<div class="t" id="rf459" style="left:602.60px;top:456.74px;font-size:6.8px;color:#555;font-weight:normal;letter-spacing:0px;">Any whitespace ch...</div>
<div class="t" style="left:672.14px;top:456.90px;font-size:7.3px;color:#2f7a45;font-weight:bold;letter-spacing:0px;font-family:'Liberation Mono',monospace;">\s</div>
<div class="t" id="rf473" style="left:602.60px;top:471.14px;font-size:6.8px;color:#555;font-weight:normal;letter-spacing:0px;">Any non-whitespac...</div>
<div class="t" style="left:672.14px;top:471.30px;font-size:7.3px;color:#2f7a45;font-weight:bold;letter-spacing:0px;font-family:'Liberation Mono',monospace;">\S</div>
</body></html>
